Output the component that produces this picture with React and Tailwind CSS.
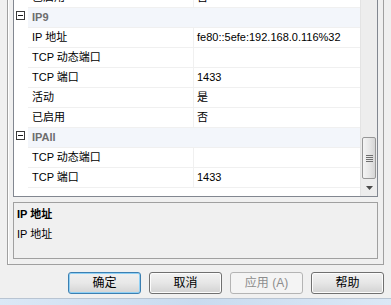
import React from 'react';

const font = { fontFamily: '"Liberation Sans", "Noto Sans CJK SC", sans-serif' };

const rows = [
    { type: 'prop', name: '已启用', value: '否', partial: true },
    { type: 'cat', name: 'IP9' },
    { type: 'prop', name: 'IP 地址', value: 'fe80::5efe:192.168.0.116%32' },
    { type: 'prop', name: 'TCP 动态端口', value: '' },
    { type: 'prop', name: 'TCP 端口', value: '1433' },
    { type: 'prop', name: '活动', value: '是' },
    { type: 'prop', name: '已启用', value: '否' },
    { type: 'cat', name: 'IPAll' },
    { type: 'prop', name: 'TCP 动态端口', value: '' },
    { type: 'prop', name: 'TCP 端口', value: '1433' },
];

const CategoryRow = ({ name }) => (
    <div className="flex h-[20px]">
        <div className="w-[14px] flex justify-end pr-[3px]">
            <div className="mt-[3px] w-[9px] h-[9px] border border-[#3a3a3a] bg-white flex items-center justify-center">
                <div className="w-[5px] h-px bg-[#1a1a1a]" />
            </div>
        </div>
        <div className="flex-1 bg-[#f3f6fb] border-b border-[#f0f0f0] flex items-center pl-[4px] text-[11px] font-bold text-[#6d6d6d]">
            {name}
        </div>
    </div>
);

const PropRow = ({ name, value, partial }) => (
    <div className={`flex h-[20px] ${partial ? '-mt-[12px]' : ''}`}>
        <div className="w-[14px]" />
        <div className="w-[165px] border-b border-[#f0f0f0] flex items-center pl-[4px] text-[11px] text-black leading-none">
            {name}
        </div>
        <div className="w-px bg-[#f0f0f0]" />
        <div className="flex-1 border-b border-[#f0f0f0] flex items-center pl-[3px] text-[11px] text-black leading-none whitespace-nowrap">
            {value}
        </div>
    </div>
);

const Scrollbar = () => (
    <div className="w-[17px] bg-[#ededed] border-l border-[#e3e3e3] flex flex-col">
        <div className="h-[137px]" />
        <div className="mx-px h-[42px] rounded-[2px] border border-[#979797] bg-gradient-to-r from-[#f4f4f4] via-[#e8e8e8] to-[#d6d6d6] flex flex-col items-center justify-center gap-[1px]">
            {[0, 1, 2, 3].map(i => (
                <div key={i} className="w-[7px] h-px bg-[#6f6f6f]" />
            ))}
        </div>
        <div className="flex-1 flex items-center justify-center">
            <svg width="7" height="4" viewBox="0 0 7 4">
                <path d="M0 0 H7 L3.5 4 Z" fill="#4a4a4a" />
            </svg>
        </div>
    </div>
);

const Button = ({ children, variant }) => {
    const base = 'w-[73px] h-[22px] rounded-[3px] flex items-center justify-center text-[12px] leading-none';
    if (variant === 'default') {
        return (
            <div className={`${base} border border-[#3c7fb1] shadow-[inset_0_0_0_1px_#8fd0f5] bg-gradient-to-b from-[#f0f0f0] via-[#e8e8e8] to-[#d4d4d4] text-black`}>
                {children}
            </div>
        );
    }
    if (variant === 'disabled') {
        return (
            <div className={`${base} border border-[#b4b4b4] bg-[#f4f4f4] text-[#8d8d8d]`}>
                {children}
            </div>
        );
    }
    return (
        <div className={`${base} border border-[#707070] shadow-[inset_0_0_0_1px_#fcfcfc] bg-gradient-to-b from-[#f2f2f2] via-[#e6e6e6] to-[#d2d2d2] text-black`}>
            {children}
        </div>
    );
};

const App = () => {
    return (
        <div className="w-[391px] h-[305px] bg-[#f0f0f0] flex flex-col overflow-hidden" style={font}>
            {/* tab page / group frame */}
            <div className="mx-[7px] h-[265px] border-x border-b border-[#a0a0a0] shadow-[inset_1px_0_0_#ffffff] px-[5px] pb-[5px] flex flex-col">
                {/* property grid */}
                <div className="h-[197px] border-x border-b border-[#828790] bg-white flex overflow-hidden">
                    <div className="flex-1 flex flex-col">
                        {rows.map((r, i) =>
                            r.type === 'cat'
                                ? <CategoryRow key={i} name={r.name} />
                                : <PropRow key={i} name={r.name} value={r.value} partial={r.partial} />
                        )}
                    </div>
                    <Scrollbar />
                </div>
                {/* description pane */}
                <div className="mt-[5px] flex-1 border border-[#a0a0a0] bg-[#f0f0f0] px-[3px] pt-[4px] flex flex-col gap-[6px] text-[11px] text-black">
                    <div className="font-bold leading-[14px]">IP 地址</div>
                    <div className="leading-[14px]">IP 地址</div>
                </div>
            </div>

            {/* buttons */}
            <div className="mt-[7px] flex gap-[8px] pl-[68px]">
                <Button variant="default">确定</Button>
                <Button>取消</Button>
                <Button variant="disabled">应用 (A)</Button>
                <Button>帮助</Button>
            </div>

            <div className="mt-[4px] h-px bg-[#b8c4d2]" />
            <div className="flex-1 bg-gradient-to-r from-[#dbe8f6] via-[#c9dbef] to-[#dbe8f6]" />
        </div>
    );
};

export default App;
